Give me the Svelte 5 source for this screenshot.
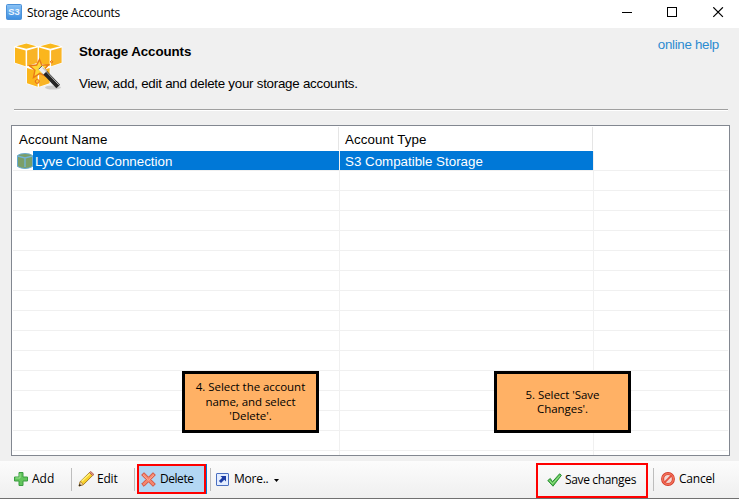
<script>
  const rows = Array.from({ length: 15 }, (_, i) => i);
</script>

{#snippet cube(x, y)}
  <g transform="translate({x} {y})">
    <path d="M0 3.3 12 0l12 3.3v16.9L12 24 0 20.2Z" fill="#fff" />
    <path d="M2 3.2 12 .6l10 2.6-10 2.5Z" fill="#f9b91d" />
    <path d="M.7 4.6 11.3 7.4v15.8L.7 19.7Z" fill="#fbb61c" />
    <path d="M12.8 7.4 23.3 4.6v15.1l-10.5 3.5Z" fill="#f9b425" />
  </g>
{/snippet}

<div class="window">
  <header class="titlebar">
    <svg class="app-icon" width="16" height="16" viewBox="0 0 16 16">
      <defs>
        <linearGradient id="blue" x1="0" y1="0" x2="0" y2="1">
          <stop offset="0" stop-color="#8bc3f5" /><stop offset="1" stop-color="#3c8de0" />
        </linearGradient>
      </defs>
      <rect x=".5" y=".5" width="15" height="15" rx="1" fill="url(#blue)" stroke="#4b91d8" />
      <text x="8" y="11.2" text-anchor="middle" textLength="11.5" lengthAdjust="spacingAndGlyphs" font-family="Liberation Sans, sans-serif" font-size="9.5" font-weight="bold" fill="#e9f4ff">S3</text>
    </svg>
    <span class="caption">Storage Accounts</span>
    <svg class="controls" width="104" height="12" viewBox="0 0 104 12" fill="none" stroke="#000" shape-rendering="crispEdges">
      <path d="M0 5.5h10M45.5.5h9v9h-9Z" />
      <path d="m91.3.3 9.6 9.6m0-9.6-9.6 9.6" shape-rendering="auto" stroke-width="1.2" />
    </svg>
  </header>

  <section class="intro">
    <svg class="logo" width="50" height="50" viewBox="0 0 50 50">
      <ellipse cx="39" cy="45.5" rx="8" ry="2" fill="#ccc" />
      {@render cube(12.3, 21.5)}
      {@render cube(0.3, 1)}
      {@render cube(24.3, 1)}
      <path d="m25.5 17.5 2.2 5.6 6.8-.3-4.7 5 2.7 6.7-6.7-3.2-6.3 4.2 1.4-7.2-5.4-4.6 7.2-.7Z" fill="#ffd735" stroke="#e97a16" stroke-width="1.4" />
      <path d="m29.5 29 14.7 15.5" stroke="#252525" stroke-width="5" />
      <path d="m26.2 25.5 5 5.3" stroke="#eee" stroke-width="5" />
      <path d="m28.5 25.7 16.3 17.2" stroke="#b9b9b9" stroke-width="1" />
      <path d="m24.6 27.3 3.4-3.4" stroke="#555" stroke-width="1" />
      <path d="m37.5 18.5 1.3 1.3-1.3 1.3-1.3-1.3ZM23.5 37l1.9 2-1 2.2h-2.3l-1-2.2Z" fill="#ffc32c" stroke="#e8681b" />
    </svg>
    <div class="words">
      <h1>Storage Accounts</h1>
      <p>View, add, edit and delete your storage accounts.</p>
    </div>
    <a href="#help">online help</a>
  </section>

  <main class="list">
    <div class="head">
      <div class="c1"><span>Account Name</span></div>
      <div class="c2"><span>Account Type</span></div>
    </div>
    <div class="row selected">
      <div class="c1">
        <svg width="16" height="16" viewBox="0 0 16 16">
          <path d="M.5 2.5Q3 .5 8 .5t7.5 2v11Q12 15.5 8 15.5T.5 13.5Z" fill="#7b9f68" stroke="#68aad1" />
          <path d="M1 3.2 8 5l7-1.8M8 5v9" fill="none" stroke="#72b4dc" stroke-width="1.3" />
        </svg>
        <span class="fill">Lyve Cloud Connection</span>
      </div>
      <div class="c2"><span>S3 Compatible Storage</span></div>
    </div>
    {#each rows as row (row)}
      <div class="row"><div class="c1"></div><div class="c2"></div></div>
    {/each}
  </main>

  <footer class="toolbar">
    <button class="add">
      <svg width="14" height="14" viewBox="0 0 14 14"><path d="M5 .5h4V5h4.5v4H9v4.5H5V9H.5V5H5Z" fill="#62c45c" stroke="#3a9d41" /><path d="M6 1.5V6H1.5" fill="none" stroke="#9be28f" /></svg>
      <span>Add</span>
    </button>
    <i class="sep"></i>
    <button class="edit">
      <svg width="17" height="16" viewBox="0 0 17 16"><path d="m1 15 1.3-4.5L11.5 1.5 14.6 4.5 5.5 13.6Z" fill="#f8cf29" stroke="#9b721a" stroke-width=".9" /><path d="m3.7 10.3 8-7.6" stroke="#fff27b" stroke-width="1.5" /><path d="m2.4 10.5 3 3L1 15Z" fill="#f4d6a5" stroke="#a77a39" stroke-width=".7" /><path d="m.8 15.3.8-2.6 1.8 1.7Z" fill="#222" /><path d="m11.5 1.5 1.2-1 3.2 3-1.3 1Z" fill="#ec9b85" stroke="#ad6458" /></svg>
      <span>Edit</span>
    </button>
    <i class="sep"></i>
    <button class="delete">
      <svg width="15" height="15" viewBox="0 0 15 15"><path d="m3 .7 4.5 4.5L12 .7 14.3 3 9.8 7.5l4.5 4.5-2.3 2.3-4.5-4.5L3 14.3.7 12l4.5-4.5L.7 3Z" fill="#f5856c" stroke="#d34b36" /><path d="m2.2 3 5.3 5.2L12.8 3" fill="none" stroke="#ffb09a" /></svg>
      <span>Delete</span>
    </button>
    <i class="sep"></i>
    <button class="more">
      <svg width="13" height="13" viewBox="0 0 13 13"><rect x=".5" y=".5" width="12" height="12" rx=".5" fill="#e3edff" stroke="#4a6fc0" /><path d="M4.5 3H10v5.5L8.3 6.8 5 10.1 2.9 8l3.3-3.3Z" fill="#1d3da4" /></svg>
      <span>More..</span>
      <svg class="caret" width="5" height="3" viewBox="0 0 5 3"><path d="M0 0h5L2.5 3Z" /></svg>
    </button>
    <button class="save">
      <svg width="15" height="14" viewBox="0 0 15 14"><path d="m.8 7.5 2.5-2 2.2 3.2L12.6.8l1.8 1.5L6 13.2Z" fill="#5cc454" stroke="#2b8d36" /><path d="m2.5 7.5 3 3.3 7.5-8.3" fill="none" stroke="#9be28d" /></svg>
      <span>Save changes</span>
    </button>
    <i class="sep"></i>
    <button class="cancel">
      <svg width="14" height="14" viewBox="0 0 14 14"><circle cx="7" cy="7" r="5.4" fill="#f4d7d2" stroke="#cf3527" stroke-width="3" /><circle cx="7" cy="7" r="5.4" fill="none" stroke="#f27058" stroke-width="1.6" /><path d="m3.4 10.6 7.2-7.2" stroke="#e65240" stroke-width="2" /></svg>
      <span>Cancel</span>
    </button>
  </footer>

  <aside class="note four"><span>4. Select the account</span><span>name, and select</span><span>'Delete'.</span></aside>
  <aside class="note five"><span>5. Select 'Save</span><span>Changes'.</span></aside>
</div>

<style>
  .window { position: relative; box-sizing: border-box; width: 739px; height: 499px; overflow: hidden; background: #f0f0f0; color: #000; display: flex; flex-direction: column; font-family: "Liberation Sans", Arial, sans-serif; font-size: 13.333px; }
  svg { display: block; flex: none; }
  span { white-space: nowrap; }
  .titlebar { height: 28px; flex: none; background: #fff; display: flex; align-items: flex-start; padding: 4px 13px 0 6px; box-sizing: border-box; }
  .caption { margin: 1px 0 0 5px; font: 12px/16px "Open Sans", sans-serif; letter-spacing: -.25px; }
  .controls { margin: 3px 0 0 auto; width: 104px; }
  .intro { height: 97px; flex: none; display: flex; align-items: flex-start; position: relative; padding-left: 14px; box-sizing: border-box; }
  .intro::after { content: ""; position: absolute; left: 14px; right: 11px; top: 81px; height: 1px; background: #a0a0a0; border-bottom: 1px solid #fff; }
  .logo { margin-top: 14px; }
  .words { margin-left: 15px; }
  h1 { margin: 16px 0 0; font-size: 13.333px; line-height: 16px; letter-spacing: -.08px; }
  p { margin: 16px 0 0; line-height: 16px; white-space: nowrap; letter-spacing: -.25px; }
  a { margin: 9px 20px 0 auto; line-height: 16px; color: #2b8bd0; text-decoration: none; letter-spacing: -.3px; }
  .list { margin: 0 9px 0 11px; height: 331px; flex: none; border: 1px solid #828790; background: #fff; box-sizing: border-box; overflow: hidden; }
  .head { height: 25px; display: flex; line-height: 25px; padding-top: 1px; box-sizing: border-box; letter-spacing: .08px; }
  .head .c1 { width: 327px; height: 23px; padding-left: 7px; border-right: 1px solid #e5e5e5; box-sizing: border-box; }
  .head .c2 { width: 254px; height: 23px; padding-left: 6px; border-right: 1px solid #e5e5e5; box-sizing: border-box; }
  .row { height: 20px; display: flex; margin: 0 1px; border-bottom: 1px solid #f0f0f0; box-sizing: border-box; }
  .row .c1 { width: 327px; border-right: 1px solid #f0f0f0; box-sizing: border-box; display: flex; }
  .row .c2 { width: 254px; border-right: 1px solid #f0f0f0; box-sizing: border-box; }
  .selected { color: #fff; line-height: 21px; }
  .selected svg { margin: 2px 0 0 4px; }
  .selected .fill { flex: 1; background: #0078d7; padding-left: 2px; }
  .selected .c2 { background: #0078d7; padding-left: 5px; }
  .toolbar { height: 38px; flex: none; margin-top: 5px; display: flex; box-sizing: border-box; border-bottom: 1px solid #707070; background: linear-gradient(#fcfcfc, #efefef); }
  button { appearance: none; border: 0; padding: 0; margin: 0; background: none; color: #000; display: flex; align-items: center; box-sizing: border-box; height: 30px; margin-top: 3px; font: 12px/16px "Open Sans", sans-serif; letter-spacing: -.2px; }
  .sep { width: 1px; height: 23px; margin-top: 7px; background: #bdbdbd; flex: none; }
  .add { width: 71px; padding-left: 14px; gap: 4px; letter-spacing: 0; }
  .edit { width: 62px; padding-left: 6px; gap: 2px; }
  .delete { width: 69px; margin-left: 2px; border: 2px solid #f00; background: #b3d7f3; padding-left: 2px; gap: 4px; box-shadow: 1px 0 0 #0078d7; letter-spacing: -.45px; }
  .delete + .sep { margin-left: 4px; }
  .more { padding-left: 5px; gap: 5px; letter-spacing: -.25px; }
  .caret { margin: 2px 0 0 1px; }
  .save { width: 112px; height: 35px; border: 2px solid #f00; margin: 2px 5px 0 auto; padding: 0 0 2px 9px; gap: 3px; letter-spacing: -.35px; }
  .cancel { width: 85px; padding-left: 7px; gap: 4px; }
  .note { position: absolute; top: 371px; width: 137px; height: 62px; box-sizing: border-box; border: 3px solid #000; background: #ffb165; display: flex; flex-direction: column; align-items: center; justify-content: center; font: 11.5px/14.4px "Open Sans", sans-serif; letter-spacing: -.05px; }
  .four { left: 182px; }
  .five { left: 494px; }
</style>
